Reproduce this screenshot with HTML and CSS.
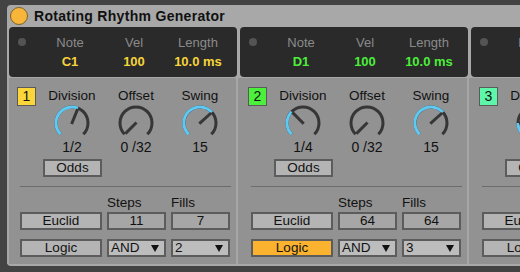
FILE: index.html
```html
<!DOCTYPE html>
<html lang="en">
  <head>
    <meta charset="UTF-8" />
    <title>Rotating Rhythm Generator</title>
    <link rel="stylesheet" href="styles.css">
  </head>
  <body>
    <div class="device">
      <div class="title"><span class="power"></span>Rotating Rhythm Generator</div>
      <div class="lanes">
        <!-- lane 1 -->
        <div class="lane">
          <div class="pad">
            <span class="pad-dot"></span>
            <div class="cell"><span class="pad-label">Note</span><span class="pad-value yellow">C1</span></div>
            <div class="cell"><span class="pad-label">Vel</span><span class="pad-value yellow">100</span></div>
            <div class="cell"><span class="pad-label">Length</span><span class="pad-value yellow">10.0 ms</span></div>
          </div>
          <div class="seq">
            <div class="knobs">
              <span class="num num-1">1</span>
              <div class="knob">
                <span class="knob-label">Division</span>
                <svg width="40" height="40" viewBox="0 0 40 40">
                  <path class="track" d="M8.69 31.31 A16 16 0 1 1 31.31 31.31" />
                  <path class="value" d="M8.69 31.31 A16 16 0 0 1 25.99 5.17" />
                  <path class="needle" d="M19.6 21 L25.6 6.1" />
                </svg>
                <span class="knob-value">1/2</span>
              </div>
              <div class="knob">
                <span class="knob-label">Offset</span>
                <svg width="40" height="40" viewBox="0 0 40 40">
                  <path class="track" d="M8.69 31.31 A16 16 0 1 1 31.31 31.31" />
                  <path class="needle" d="M20.5 19.5 L9.4 30.6" />
                </svg>
                <span class="knob-value">0 /32</span>
              </div>
              <div class="knob">
                <span class="knob-label">Swing</span>
                <svg width="40" height="40" viewBox="0 0 40 40">
                  <path class="track" d="M8.69 31.31 A16 16 0 1 1 31.31 31.31" />
                  <path class="value" d="M8.69 31.31 A16 16 0 1 1 31.89 9.30" />
                  <path class="needle" d="M19.3 20.6 L31.1 10" />
                </svg>
                <span class="knob-value">15</span>
              </div>
            </div>
            <div class="odds-row"><div class="btn odds">Odds</div></div>
            <div class="rule"></div>
            <div class="grid">
              <span></span><span class="grid-label">Steps</span><span class="grid-label">Fills</span>
              <div class="btn">Euclid</div><div class="field">11</div><div class="field">7</div>
              <div class="btn">Logic</div><div class="menu">AND<i></i></div><div class="menu">2<i></i></div>
            </div>
          </div>
        </div>
        <!-- lane 2 -->
        <div class="lane">
          <div class="pad">
            <span class="pad-dot"></span>
            <div class="cell"><span class="pad-label">Note</span><span class="pad-value green">D1</span></div>
            <div class="cell"><span class="pad-label">Vel</span><span class="pad-value green">100</span></div>
            <div class="cell"><span class="pad-label">Length</span><span class="pad-value green">10.0 ms</span></div>
          </div>
          <div class="seq">
            <div class="knobs">
              <span class="num num-2">2</span>
              <div class="knob">
                <span class="knob-label">Division</span>
                <svg width="40" height="40" viewBox="0 0 40 40">
                  <path class="track" d="M8.69 31.31 A16 16 0 1 1 31.31 31.31" />
                  <path class="value" d="M8.69 31.31 A16 16 0 0 1 8.69 8.69" />
                  <path class="needle" d="M20.7 20.7 L9.4 9.4" />
                </svg>
                <span class="knob-value">1/4</span>
              </div>
              <div class="knob">
                <span class="knob-label">Offset</span>
                <svg width="40" height="40" viewBox="0 0 40 40">
                  <path class="track" d="M8.69 31.31 A16 16 0 1 1 31.31 31.31" />
                  <path class="needle" d="M20.5 19.5 L9.4 30.6" />
                </svg>
                <span class="knob-value">0 /32</span>
              </div>
              <div class="knob">
                <span class="knob-label">Swing</span>
                <svg width="40" height="40" viewBox="0 0 40 40">
                  <path class="track" d="M8.69 31.31 A16 16 0 1 1 31.31 31.31" />
                  <path class="value" d="M8.69 31.31 A16 16 0 1 1 31.89 9.30" />
                  <path class="needle" d="M19.3 20.6 L31.1 10" />
                </svg>
                <span class="knob-value">15</span>
              </div>
            </div>
            <div class="odds-row"><div class="btn odds">Odds</div></div>
            <div class="rule"></div>
            <div class="grid">
              <span></span><span class="grid-label">Steps</span><span class="grid-label">Fills</span>
              <div class="btn">Euclid</div><div class="field">64</div><div class="field">64</div>
              <div class="btn on">Logic</div><div class="menu">AND<i></i></div><div class="menu">3<i></i></div>
            </div>
          </div>
        </div>
        <!-- lane 3 -->
        <div class="lane">
          <div class="pad">
            <span class="pad-dot"></span>
            <div class="cell"><span class="pad-label">Note</span><span class="pad-value mint">E1</span></div>
            <div class="cell"><span class="pad-label">Vel</span><span class="pad-value mint">100</span></div>
            <div class="cell"><span class="pad-label">Length</span><span class="pad-value mint">10.0 ms</span></div>
          </div>
          <div class="seq">
            <div class="knobs">
              <span class="num num-3">3</span>
              <div class="knob">
                <span class="knob-label">Division</span>
                <svg width="40" height="40" viewBox="0 0 40 40">
                  <path class="track" d="M8.69 31.31 A16 16 0 1 1 31.31 31.31" />
                  <path class="value" d="M8.69 31.31 A16 16 0 0 1 4 20" />
                  <path class="needle" d="M21 20 L5 20" />
                </svg>
                <span class="knob-value">1/8</span>
              </div>
              <div class="knob">
                <span class="knob-label">Offset</span>
                <svg width="40" height="40" viewBox="0 0 40 40">
                  <path class="track" d="M8.69 31.31 A16 16 0 1 1 31.31 31.31" />
                  <path class="needle" d="M20.5 19.5 L9.4 30.6" />
                </svg>
                <span class="knob-value">0 /32</span>
              </div>
              <div class="knob">
                <span class="knob-label">Swing</span>
                <svg width="40" height="40" viewBox="0 0 40 40">
                  <path class="track" d="M8.69 31.31 A16 16 0 1 1 31.31 31.31" />
                  <path class="needle" d="M20.5 19.5 L9.4 30.6" />
                </svg>
                <span class="knob-value">0</span>
              </div>
            </div>
            <div class="odds-row"><div class="btn odds">Odds</div></div>
            <div class="rule"></div>
            <div class="grid">
              <span></span><span class="grid-label">Steps</span><span class="grid-label">Fills</span>
              <div class="btn">Euclid</div><div class="field">16</div><div class="field">4</div>
              <div class="btn">Logic</div><div class="menu">AND<i></i></div><div class="menu">1<i></i></div>
            </div>
          </div>
        </div>
      </div>
    </div>
  </body>
</html>
```

FILE: styles.css
```css
body {
  margin: 0;
  background-color: #434343;
  overflow: hidden;
  font-family: "Liberation Sans", Arial, sans-serif;
  font-size: 13px;
  color: #111;
}
.device {
  margin: 5px 0 0 7px;
  width: 700px;
  height: 261px;
  background-color: #a8a8a8;
  border-radius: 4px 4px 0 4px;
  overflow: hidden;
}
.title {
  height: 22px;
  display: flex;
  align-items: center;
  padding-left: 3px;
  font-size: 14px;
  font-weight: bold;
  letter-spacing: 0.3px;
}
.power {
  width: 16px;
  height: 16px;
  border: 1px solid #7d6329;
  border-radius: 50%;
  background-color: #f7b53a;
  margin-right: 6px;
}
.lanes {
  display: flex;
}
.lane {
  width: 231px;
  flex-shrink: 0;
}

/* dark note pad */
.pad {
  margin-left: 2px;
  width: 228px;
  height: 50px;
  box-sizing: border-box;
  background-color: #2a2a2a;
  border-radius: 4px;
  display: flex;
  padding-left: 9px;
}
.pad-dot {
  width: 8px;
  height: 8px;
  margin-top: 11px;
  margin-right: 12px;
  border-radius: 50%;
  background-color: #545454;
}
.cell {
  width: 64px;
  display: flex;
  flex-direction: column;
  align-items: center;
  padding-top: 8px;
}
.pad-label {
  line-height: 16px;
  color: #8a8a8a;
}
.pad-value {
  line-height: 16px;
  margin-top: 3px;
  font-weight: bold;
}
.yellow { color: #f6d43a; }
.green { color: #4cee3a; }
.mint { color: #5ef6a9; }

/* lower section */
.seq {
  margin-top: 1px;
  height: 186px;
  background-color: #929292;
  border-left: 2px solid #a6a6a6;
  margin-left: -2px;
  padding-left: 2px;
}
.lane:first-child .seq {
  margin-left: 0;
  padding-left: 0;
}
.knobs {
  display: flex;
  padding-left: 8px;
}
.num {
  width: 19px;
  height: 19px;
  box-sizing: border-box;
  margin-top: 9px;
  margin-right: 4px;
  border: 1px solid #5a5a5a;
  text-align: center;
  line-height: 17px;
  font-size: 14px;
}
.num-1 { background-color: #fbd63a; }
.num-2 { background-color: #4cef3b; }
.num-3 { background-color: #5ef6a9; }
.knob {
  width: 64px;
  display: flex;
  flex-direction: column;
  align-items: center;
}
.knob-label {
  margin-top: 10px;
  line-height: 15px;
  font-size: 13.5px;
}
.knob svg {
  display: block;
}
.knob-value {
  margin-top: -3px;
  line-height: 14px;
  font-size: 14px;
}
.track,
.value {
  fill: none;
  stroke-width: 3;
}
.track { stroke: #363636; }
.value { stroke: #5ec9f3; }
.needle {
  stroke: #363636;
  stroke-width: 3;
}
.odds-row {
  padding-left: 34px;
  margin-top: 5px;
}
.btn,
.field,
.menu {
  height: 18px;
  box-sizing: border-box;
  border: 2px solid #5c5c5c;
  line-height: 14px;
  text-align: center;
  font-size: 13.5px;
}
.btn { background-color: #b4b4b4; }
.btn.on { background-color: #fbb22f; }
.odds { width: 59px; }
.rule {
  margin: 9px 0 0 11px;
  width: 211px;
  height: 1px;
  background-color: #6c6c6c;
}
.grid {
  display: grid;
  grid-template-columns: 82px 59px 59px;
  grid-template-rows: 16px 27px 18px;
  column-gap: 5px;
  align-items: start;
  margin-top: 9px;
  padding-left: 11px;
}
.grid-label {
  line-height: 14px;
  font-size: 13.5px;
}
.field { background-color: #a6a6a6; }
.menu {
  background-color: #bdbdbd;
  text-align: left;
  padding-left: 2px;
  display: flex;
  justify-content: space-between;
  align-items: center;
  padding-right: 5px;
}
.menu i {
  width: 0;
  height: 0;
  border-left: 4px solid transparent;
  border-right: 4px solid transparent;
  border-top: 7px solid #111;
}
```
